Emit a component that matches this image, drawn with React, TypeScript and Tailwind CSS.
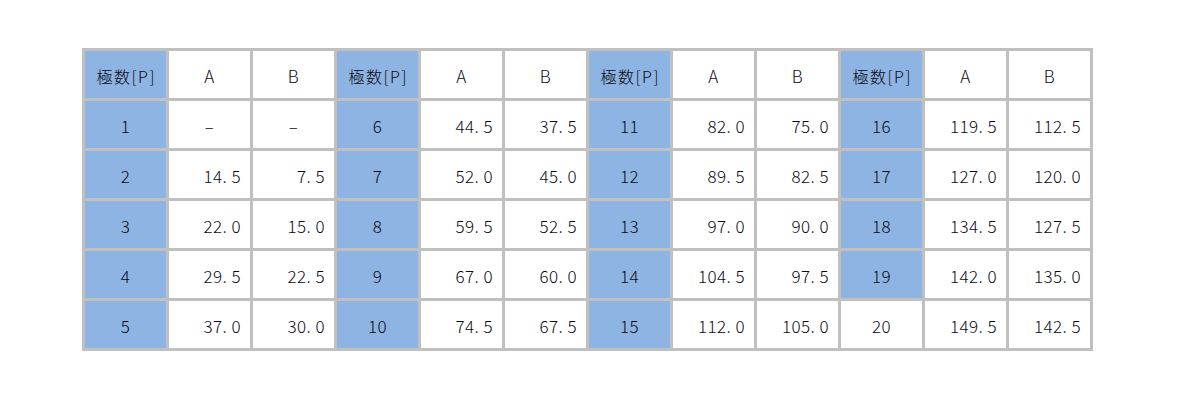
import React from "react";

type Row = [string, string | null, string | null];

const groups: Row[][] = [
    [
        ["1", null, null],
        ["2", "14.5", "7.5"],
        ["3", "22.0", "15.0"],
        ["4", "29.5", "22.5"],
        ["5", "37.0", "30.0"],
    ],
    [
        ["6", "44.5", "37.5"],
        ["7", "52.0", "45.0"],
        ["8", "59.5", "52.5"],
        ["9", "67.0", "60.0"],
        ["10", "74.5", "67.5"],
    ],
    [
        ["11", "82.0", "75.0"],
        ["12", "89.5", "82.5"],
        ["13", "97.0", "90.0"],
        ["14", "104.5", "97.5"],
        ["15", "112.0", "105.0"],
    ],
    [
        ["16", "119.5", "112.5"],
        ["17", "127.0", "120.0"],
        ["18", "134.5", "127.5"],
        ["19", "142.0", "135.0"],
        ["20", "149.5", "142.5"],
    ],
];

function Cell(props: { children: React.ReactNode; blue?: boolean; right?: boolean }) {
    return (
        <div
            className={
                "flex items-center h-[47px] pt-[3px] " +
                (props.blue ? "bg-[#8db4e2] " : "bg-white ") +
                (props.right ? "justify-end pr-[9px]" : "justify-center")
            }
        >
            {props.children}
        </div>
    );
}

// period in the values takes a wider cell, as in the source font
function Num(props: { v: string }) {
    const [a, b] = props.v.split(".");
    return (
        <span>
            {a}
            <span className="inline-block w-[9px]">.</span>
            {b}
        </span>
    );
}

export default function App() {
    return (
        <div className="w-[1177px] h-[401px] bg-white pt-[48px] pl-[82px]">
            <div
                className="grid grid-cols-[repeat(12,81px)] gap-[3px] p-[3px] bg-[#c0c0c0] w-fit text-[17px] tracking-[0.4px] font-light text-[#0a0a14]"
                style={{ fontFamily: '"Noto Sans CJK JP", "Noto Sans", sans-serif' }}
            >
                {groups.map((_, g) => (
                    <React.Fragment key={"h" + g}>
                        <Cell blue>
                            <span className="text-[16px] tracking-[1.5px] pl-[1.5px]">極数[P]</span>
                        </Cell>
                        <Cell>A</Cell>
                        <Cell>B</Cell>
                    </React.Fragment>
                ))}
                {[0, 1, 2, 3, 4].map((r) =>
                    groups.map((grp, g) => {
                        const row = grp[r];
                        const isBlue = row[0] !== "20";
                        return (
                            <React.Fragment key={r + "-" + g}>
                                <Cell blue={isBlue}>{row[0]}</Cell>
                                {row[1] === null ? (
                                    <Cell>–</Cell>
                                ) : (
                                    <Cell right>
                                        <Num v={row[1]} />
                                    </Cell>
                                )}
                                {row[2] === null ? (
                                    <Cell>–</Cell>
                                ) : (
                                    <Cell right>
                                        <Num v={row[2]} />
                                    </Cell>
                                )}
                            </React.Fragment>
                        );
                    })
                )}
            </div>
        </div>
    );
}
